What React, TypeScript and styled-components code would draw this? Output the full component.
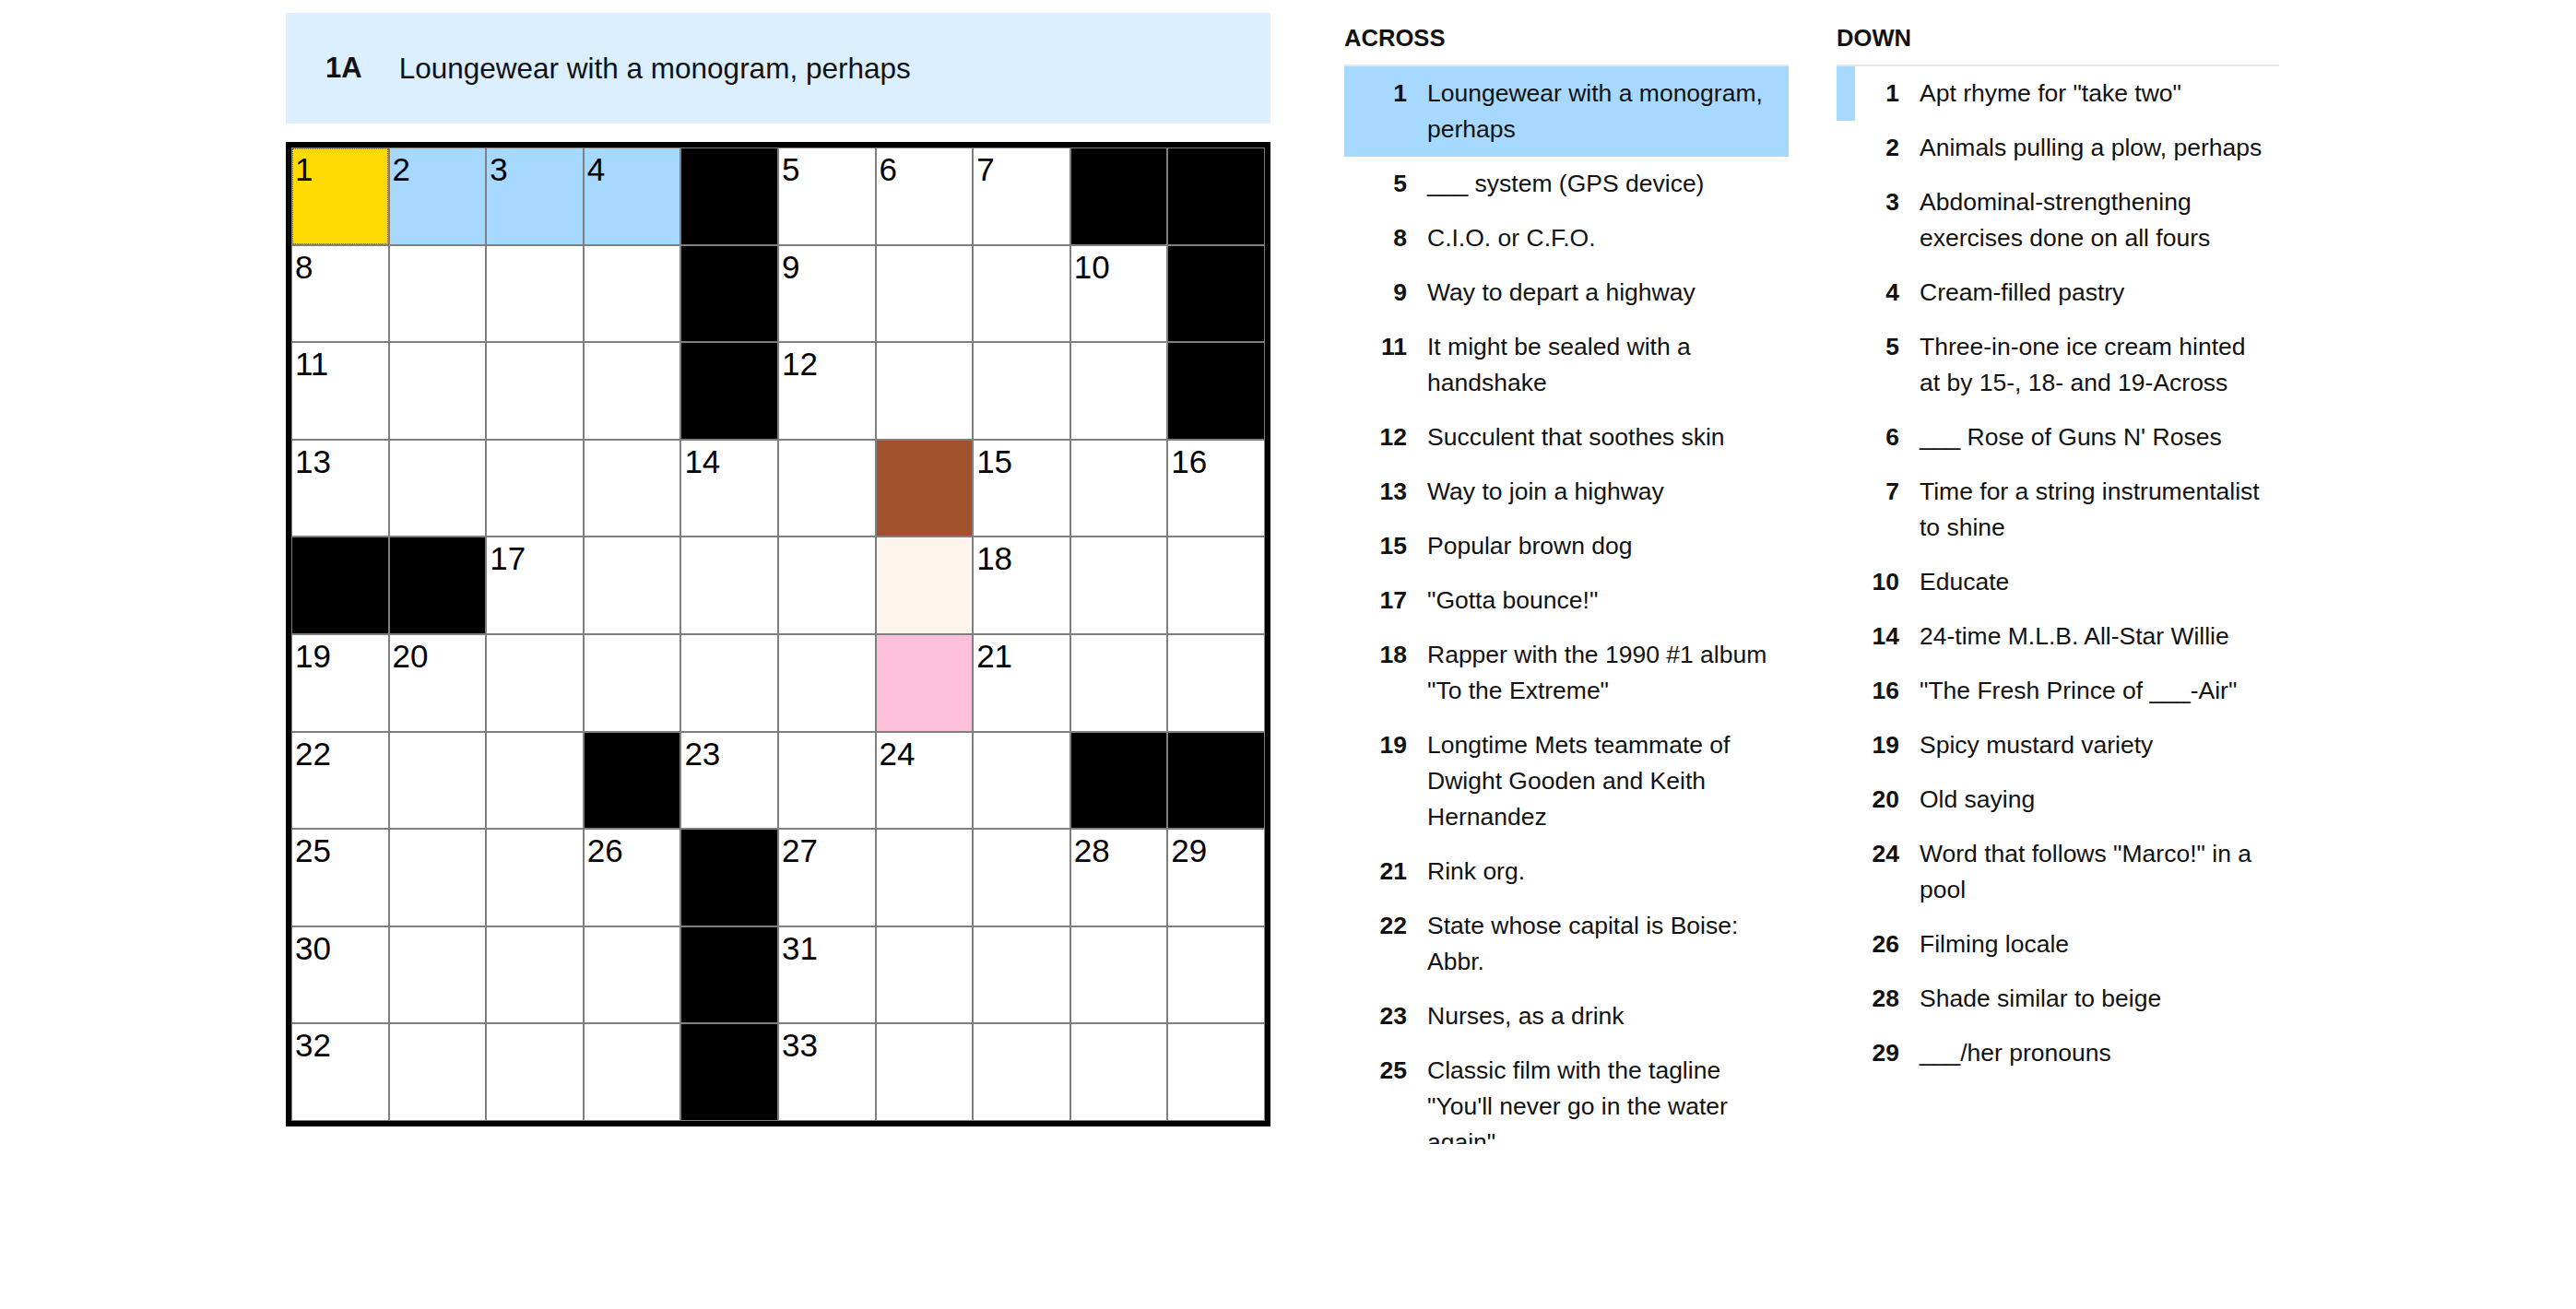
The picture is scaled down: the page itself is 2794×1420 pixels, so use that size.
import React from "react";
import styled, { createGlobalStyle, css } from "styled-components";

type Fill = "open" | "block" | "selected" | "word" | "brown" | "cream" | "pink";

type Clue = { num: number; text: string; state?: "active" | "related" };

// grid rows: # block, . open, Y selected cell, H current word,
// B/C/P the three shaded squares (they count as blocks for numbering)
const rows = [
  "YHHH#...##",
  "....#....#",
  "....#....#",
  "......B...",
  "##....C...",
  "......P...",
  "...#....##",
  "....#.....",
  "....#.....",
  "....#.....",
];

const fillOf: Record<string, Fill> = {
  "#": "block",
  ".": "open",
  Y: "selected",
  H: "word",
  B: "brown",
  C: "cream",
  P: "pink",
};

const isBlock = (r: number, c: number) => {
  if (r < 0 || c < 0 || r >= rows.length || c >= rows[0].length) return true;
  return "#BCP".includes(rows[r][c]);
};

const numbered = () => {
  let n = 0;
  return rows.map((row, r) =>
    row.split("").map((ch, c) => {
      let label: number | undefined;
      if (!isBlock(r, c)) {
        const across = isBlock(r, c - 1) && !isBlock(r, c + 1);
        const down = isBlock(r - 1, c) && !isBlock(r + 1, c);
        if (across || down) label = ++n;
      }
      return { fill: fillOf[ch], label };
    })
  );
};

const across: Clue[] = [
  { num: 1, text: "Loungewear with a monogram, perhaps", state: "active" },
  { num: 5, text: "___ system (GPS device)" },
  { num: 8, text: "C.I.O. or C.F.O." },
  { num: 9, text: "Way to depart a highway" },
  { num: 11, text: "It might be sealed with a handshake" },
  { num: 12, text: "Succulent that soothes skin" },
  { num: 13, text: "Way to join a highway" },
  { num: 15, text: "Popular brown dog" },
  { num: 17, text: "\"Gotta bounce!\"" },
  { num: 18, text: "Rapper with the 1990 #1 album \"To the Extreme\"" },
  { num: 19, text: "Longtime Mets teammate of Dwight Gooden and Keith Hernandez" },
  { num: 21, text: "Rink org." },
  { num: 22, text: "State whose capital is Boise: Abbr." },
  { num: 23, text: "Nurses, as a drink" },
  { num: 25, text: "Classic film with the tagline \"You'll never go in the water again\"" },
];

const down: Clue[] = [
  { num: 1, text: "Apt rhyme for \"take two\"", state: "related" },
  { num: 2, text: "Animals pulling a plow, perhaps" },
  { num: 3, text: "Abdominal-strengthening exercises done on all fours" },
  { num: 4, text: "Cream-filled pastry" },
  { num: 5, text: "Three-in-one ice cream hinted at by 15-, 18- and 19-Across" },
  { num: 6, text: "___ Rose of Guns N' Roses" },
  { num: 7, text: "Time for a string instrumentalist to shine" },
  { num: 10, text: "Educate" },
  { num: 14, text: "24-time M.L.B. All-Star Willie" },
  { num: 16, text: "\"The Fresh Prince of ___-Air\"" },
  { num: 19, text: "Spicy mustard variety" },
  { num: 20, text: "Old saying" },
  { num: 24, text: "Word that follows \"Marco!\" in a pool" },
  { num: 26, text: "Filming locale" },
  { num: 28, text: "Shade similar to beige" },
  { num: 29, text: "___/her pronouns" },
];

const GlobalStyle = createGlobalStyle`
  html, body {
    margin: 0;
    padding: 0;
    background: #fff;
  }
  body {
    font-family: "Liberation Sans", Arial, sans-serif;
    color: #121212;
  }
`;

const fills: Record<Fill, string> = {
  open: "#ffffff",
  block: "#000000",
  selected: "#ffda00",
  word: "#a7d8ff",
  brown: "#a0522d",
  cream: "#fdf4eb",
  pink: "#ffc0da",
};

const Page = styled.main`
  display: flex;
  align-items: flex-start;
  gap: 80px;
  padding: 14px 0 0 310px;
  min-height: 1420px;
  box-sizing: border-box;
`;

const Board = styled.section`
  width: 1068px;
  display: flex;
  flex-direction: column;
  gap: 20px;
`;

const ClueBar = styled.div`
  height: 120px;
  display: flex;
  align-items: center;
  padding-left: 43px;
  background: #dcefff;
  font-size: 31.5px;
`;

const BarLabel = styled.span`
  font-weight: 700;
  font-size: 31px;
  margin-right: 40px;
`;

const Grid = styled.div`
  display: grid;
  grid-template-columns: repeat(10, 105.6px);
  grid-auto-rows: 105.6px;
  border: 6px solid #000;
`;

const Cell = styled.div<{ $fill: Fill }>`
  box-sizing: border-box;
  border: 1px solid #7f7f7f;
  background: ${(p) => fills[p.$fill]};
  padding: 5px 0 0 3px;
  font-size: 35px;
  line-height: 1;
  color: #000;
  ${(p) =>
    p.$fill === "selected" &&
    css`
      outline: 1px dotted #7a6500;
      outline-offset: -2px;
    `}
`;

const ClueLists = styled.div`
  display: flex;
  gap: 52px;
`;

const ClueList = styled.section<{ $width: number }>`
  width: ${(p) => p.$width}px;
  display: flex;
  flex-direction: column;
`;

const ListTitle = styled.h3`
  margin: 0;
  height: 58px;
  box-sizing: border-box;
  padding-top: 7.5px;
  line-height: 39px;
  font-size: 25.6px;
  font-weight: 700;
  text-transform: uppercase;
  border-bottom: 2px solid #e6e6e6;
`;

const Clues = styled.ol<{ $height?: number }>`
  list-style: none;
  margin: 0;
  padding: 0;
  ${(p) =>
    p.$height &&
    css`
      height: ${p.$height}px;
      overflow-y: auto;
      scrollbar-width: none;
    `}
`;

const ClueItem = styled.li<{ $state?: "active" | "related" }>`
  display: flex;
  align-items: flex-start;
  padding: 10px 11px 10px 0;
  border-left: 20px solid transparent;
  font-size: 26.5px;
  line-height: 39px;
  ${(p) =>
    p.$state === "active" &&
    css`
      background: #a7d8ff;
      border-left-color: #a7d8ff;
    `}
  ${(p) =>
    p.$state === "related" &&
    css`
      border-left-color: #a7d8ff;
    `}
`;

const ClueNum = styled.span`
  flex: 0 0 48px;
  margin-right: 22px;
  text-align: right;
  font-weight: 700;
`;

const ClueText = styled.span`
  flex: 1;
`;

const ClueColumn: React.FC<{ title: string; clues: Clue[]; height?: number; width: number }> = ({
  title,
  clues,
  height,
  width,
}) => (
  <ClueList $width={width}>
    <ListTitle>{title}</ListTitle>
    <Clues $height={height}>
      {clues.map((c) => (
        <ClueItem key={c.num} $state={c.state}>
          <ClueNum>{c.num}</ClueNum>
          <ClueText>{c.text}</ClueText>
        </ClueItem>
      ))}
    </Clues>
  </ClueList>
);

export default function App() {
  const cells = numbered();
  return (
    <>
      <GlobalStyle />
      <Page>
        <Board>
          <ClueBar>
            <BarLabel>1A</BarLabel>
            <span>Loungewear with a monogram, perhaps</span>
          </ClueBar>
          <Grid>
            {cells.flat().map((cell, i) => (
              <Cell key={i} $fill={cell.fill}>
                {cell.label}
              </Cell>
            ))}
          </Grid>
        </Board>
        <ClueLists>
          <ClueColumn title="Across" clues={across} height={1169} width={482} />
          <ClueColumn title="Down" clues={down} width={480} />
        </ClueLists>
      </Page>
    </>
  );
}
